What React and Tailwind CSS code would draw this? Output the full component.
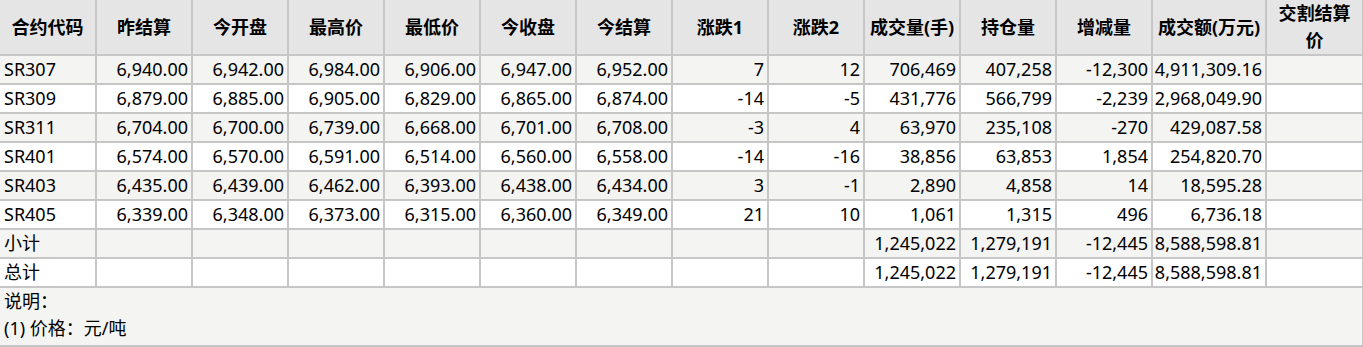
const headers = ['合约代码', '昨结算', '今开盘', '最高价', '最低价', '今收盘', '今结算', '涨跌1', '涨跌2', '成交量(手)', '持仓量', '增减量', '成交额(万元)', '交割结算价'];

const rows = [
  ['SR307', '6,940.00', '6,942.00', '6,984.00', '6,906.00', '6,947.00', '6,952.00', '7', '12', '706,469', '407,258', '-12,300', '4,911,309.16', ''],
  ['SR309', '6,879.00', '6,885.00', '6,905.00', '6,829.00', '6,865.00', '6,874.00', '-14', '-5', '431,776', '566,799', '-2,239', '2,968,049.90', ''],
  ['SR311', '6,704.00', '6,700.00', '6,739.00', '6,668.00', '6,701.00', '6,708.00', '-3', '4', '63,970', '235,108', '-270', '429,087.58', ''],
  ['SR401', '6,574.00', '6,570.00', '6,591.00', '6,514.00', '6,560.00', '6,558.00', '-14', '-16', '38,856', '63,853', '1,854', '254,820.70', ''],
  ['SR403', '6,435.00', '6,439.00', '6,462.00', '6,393.00', '6,438.00', '6,434.00', '3', '-1', '2,890', '4,858', '14', '18,595.28', ''],
  ['SR405', '6,339.00', '6,348.00', '6,373.00', '6,315.00', '6,360.00', '6,349.00', '21', '10', '1,061', '1,315', '496', '6,736.18', ''],
  ['小计', '', '', '', '', '', '', '', '', '1,245,022', '1,279,191', '-12,445', '8,588,598.81', ''],
  ['总计', '', '', '', '', '', '', '', '', '1,245,022', '1,279,191', '-12,445', '8,588,598.81', ''],
];

const widths = [96, 96, 96, 96, 96, 96, 96, 96, 96, 96, 96, 96, 114, 97];

export default function App() {
  return (
    <div
      className="w-[1363px] h-[347px] overflow-hidden bg-white text-black text-[18px] leading-[27px]"
      style={{ fontFamily: '"Noto Sans", "Noto Sans CJK SC", sans-serif' }}
    >
      <table className="table-fixed border-collapse w-[1363px]">
        <colgroup>
          {widths.map((w, i) => (
            <col key={i} style={{ width: w }} />
          ))}
        </colgroup>
        <thead>
          <tr className="bg-[#e5e5e5] h-[55px]">
            {headers.map((h, i) => (
              <th
                key={i}
                className={`border-2 border-[#c6c6c6] border-t-0 font-bold text-center align-middle ${i === 0 ? 'border-l-0' : ''} ${i === 13 ? 'px-[8px]' : 'px-1'}`}
              >
                {h}
              </th>
            ))}
          </tr>
        </thead>
        <tbody>
          {rows.map((r, ri) => (
            <tr key={ri} className={`h-[29px] ${ri % 2 === 0 ? 'bg-[#f4f4f3]' : 'bg-white'}`}>
              {r.map((c, ci) => (
                <td
                  key={ci}
                  className={`border-2 border-[#c6c6c6] py-0 whitespace-nowrap ${ci === 0 ? 'border-l-0 text-left pl-1' : 'text-right pr-[3px] pl-0'}`}
                >
                  {c}
                </td>
              ))}
            </tr>
          ))}
          <tr className="bg-[#f4f4f3]">
            <td colSpan={14} className="border-2 border-l-0 border-[#c6c6c6] pl-1 pt-0 pb-[3px] leading-[27px]">
              <div>说明：</div>
              <div>(1) 价格：元/吨</div>
            </td>
          </tr>
        </tbody>
      </table>
    </div>
  );
}
